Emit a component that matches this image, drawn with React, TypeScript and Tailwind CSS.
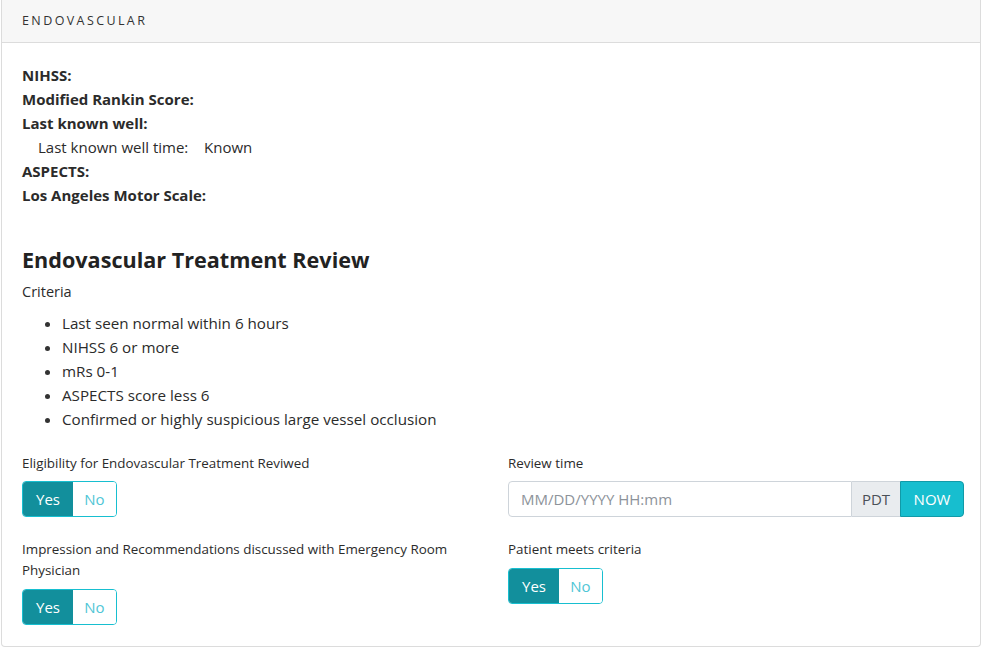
import React from "react";

function YesNo() {
  return (
    <div className="flex h-9 w-[95px] overflow-hidden rounded-[4px] border border-[#17bfd0] text-[15px]">
      <div className="flex w-[50px] items-center justify-center bg-[#128f9c] text-white">Yes</div>
      <div className="flex flex-1 items-center justify-center bg-white text-[#4fc6d6]">No</div>
    </div>
  );
}

export default function App() {
  return (
    <div className="min-h-[647px] bg-white" style={{ fontFamily: "'Open Sans', Lato, sans-serif" }}>
      <div className="ml-px w-[980px] rounded-b-[4px] border border-t-0 border-[#dcdcdc] text-[#2b2b2b]">
        <div className="flex h-[43px] items-center border-b border-[#dcdcdc] bg-[#f7f7f7] px-[20px] text-[12.5px] tracking-[2.4px] text-[#333]">
          ENDOVASCULAR
        </div>
        <div className="pl-[20px] pr-[16px] pt-[20px] pb-[21px]">
          <div className="text-[15px] leading-[24px]">
            <div className="font-bold">NIHSS:</div>
            <div className="font-bold">Modified Rankin Score:</div>
            <div className="font-bold">Last known well:</div>
            <div className="flex pl-4">
              <span className="w-[166px]">Last known well time:</span>
              <span>Known</span>
            </div>
            <div className="font-bold">ASPECTS:</div>
            <div className="font-bold">Los Angeles Motor Scale:</div>
          </div>
          <h2 className="mt-[40px] text-[21.6px] font-bold leading-[26px] text-[#222]">Endovascular Treatment Review</h2>
          <div className="mt-[8px] text-[14.5px] leading-[21px]">Criteria</div>
          <ul className="mt-[9px] list-disc pl-[40px] text-[15.2px] leading-[24px] marker:text-[#333]">
            <li>Last seen normal within 6 hours</li>
            <li>NIHSS 6 or more</li>
            <li>mRs 0-1</li>
            <li>ASPECTS score less 6</li>
            <li>Confirmed or highly suspicious large vessel occlusion</li>
          </ul>
          <div className="mt-[22px] grid grid-cols-2 gap-x-[30px] gap-y-[22px]">
            <div>
              <div className="text-[13.4px] leading-[21px]">Eligibility for Endovascular Treatment Reviwed</div>
              <div className="mt-[7px]"><YesNo /></div>
            </div>
            <div>
              <div className="text-[13.4px] leading-[21px]">Review time</div>
              <div className="mt-[7px] flex h-9">
                <div className="flex flex-1 items-center rounded-l-[4px] border border-[#ced4da] px-3 text-[15px] text-[#8d939a]">
                  MM/DD/YYYY HH:mm
                </div>
                <div className="flex w-[48px] items-center justify-center border-y border-[#ced4da] bg-[#e9ecef] text-[15px] text-[#495057]">
                  PDT
                </div>
                <div className="flex w-[64px] items-center justify-center rounded-r-[4px] border border-[#119aa8] bg-[#17becf] text-[15px] text-white">
                  NOW
                </div>
              </div>
            </div>
            <div>
              <div className="text-[13.4px] leading-[21px]">Impression and Recommendations discussed with Emergency Room Physician</div>
              <div className="mt-[8px]"><YesNo /></div>
            </div>
            <div>
              <div className="text-[13.4px] leading-[21px]">Patient meets criteria</div>
              <div className="mt-[8px]"><YesNo /></div>
            </div>
          </div>
        </div>
      </div>
    </div>
  );
}
